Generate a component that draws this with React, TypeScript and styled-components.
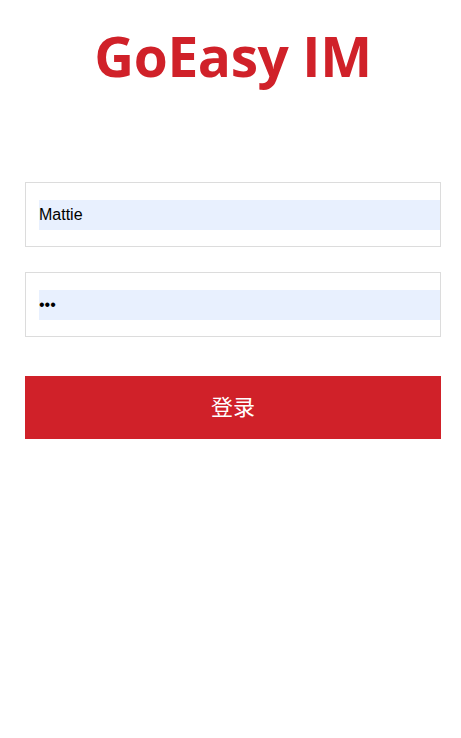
import React from "react";
import styled, { createGlobalStyle } from "styled-components";

const Global = createGlobalStyle`
  html, body { margin: 0; padding: 0; background: #fff; }
  body { font-family: "Liberation Sans", Arial, sans-serif; }
`;

const Page = styled.div`
  width: 461px;
  padding: 17px 20px 0 25px;
  box-sizing: border-box;
  display: flex;
  flex-direction: column;
`;

const Title = styled.h1`
  margin: 0;
  height: 78px;
  font-family: "Open Sans", "Noto Sans", sans-serif;
  font-weight: 700;
  font-size: 55px;
  line-height: 78px;
  color: #d02129;
  text-align: center;
  letter-spacing: -0.4px;
`;

const Form = styled.div`
  margin-top: 87px;
  display: flex;
  flex-direction: column;
  gap: 25px;
`;

const Field = styled.div`
  height: 65px;
  box-sizing: border-box;
  border: 1px solid #dcdcdc;
  padding: 17px 0 0 13px;
  overflow: hidden;
`;

const Input = styled.input`
  display: block;
  width: 100%;
  height: 30px;
  box-sizing: border-box;
  border: none;
  outline: none;
  margin: 0;
  padding: 0;
  background: #e8f0fe;
  font-family: "Liberation Sans", Arial, sans-serif;
  font-size: 16px;
  color: #000;
`;

const Button = styled.button`
  margin-top: 14px;
  height: 63px;
  border: none;
  padding: 0 0 5px;
  background: #d02129;
  color: #fff;
  font-family: "Noto Sans CJK SC", sans-serif;
  font-weight: 400;
  font-size: 22px;
  cursor: pointer;
`;

export default function App() {
  return (
    <>
      <Global />
      <Page>
        <Title>GoEasy IM</Title>
        <Form>
          <Field>
            <Input type="text" defaultValue="Mattie" />
          </Field>
          <Field>
            <Input type="password" defaultValue="123" />
          </Field>
          <Button>登录</Button>
        </Form>
      </Page>
    </>
  );
}
